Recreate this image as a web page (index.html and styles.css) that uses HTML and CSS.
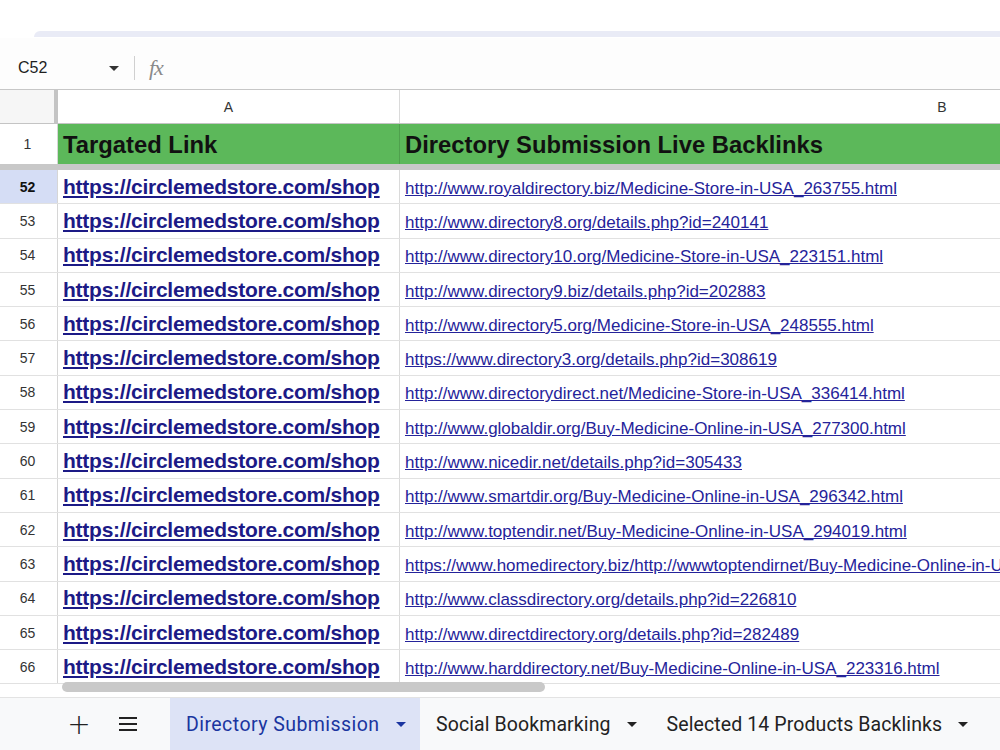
FILE: index.html
```html
<!DOCTYPE html>
<html lang="en">
<head>
	<meta charset="UTF-8">
	<link rel="stylesheet" href="styles.css">
</head>
<body>
<div id="page">
	<div class="topbar"><div class="band"></div></div>

	<div class="formula">
		<span class="namebox">C52</span>
		<span class="caret"></span>
		<span class="sep"></span>
		<span class="fx">fx</span>
	</div>

	<div id="sheet">
		<div class="row colhead">
			<div class="num"></div>
			<div class="cell a">A</div>
			<div class="cell b">B</div>
		</div>
		<div class="row title">
			<div class="num">1</div>
			<div class="cell a">Targated Link</div>
			<div class="cell b">Directory Submission Live Backlinks</div>
		</div>

		<div class="row sel">
			<div class="num">52</div>
			<div class="cell a"><a href="#">https://circlemedstore.com/shop</a></div>
			<div class="cell b"><a href="#">http://www.royaldirectory.biz/Medicine-Store-in-USA_263755.html</a></div>
		</div>
		<div class="row">
			<div class="num">53</div>
			<div class="cell a"><a href="#">https://circlemedstore.com/shop</a></div>
			<div class="cell b"><a href="#">http://www.directory8.org/details.php?id=240141</a></div>
		</div>
		<div class="row">
			<div class="num">54</div>
			<div class="cell a"><a href="#">https://circlemedstore.com/shop</a></div>
			<div class="cell b"><a href="#">http://www.directory10.org/Medicine-Store-in-USA_223151.html</a></div>
		</div>
		<div class="row">
			<div class="num">55</div>
			<div class="cell a"><a href="#">https://circlemedstore.com/shop</a></div>
			<div class="cell b"><a href="#">http://www.directory9.biz/details.php?id=202883</a></div>
		</div>
		<div class="row">
			<div class="num">56</div>
			<div class="cell a"><a href="#">https://circlemedstore.com/shop</a></div>
			<div class="cell b"><a href="#">http://www.directory5.org/Medicine-Store-in-USA_248555.html</a></div>
		</div>
		<div class="row">
			<div class="num">57</div>
			<div class="cell a"><a href="#">https://circlemedstore.com/shop</a></div>
			<div class="cell b"><a href="#">https://www.directory3.org/details.php?id=308619</a></div>
		</div>
		<div class="row">
			<div class="num">58</div>
			<div class="cell a"><a href="#">https://circlemedstore.com/shop</a></div>
			<div class="cell b"><a href="#">http://www.directorydirect.net/Medicine-Store-in-USA_336414.html</a></div>
		</div>
		<div class="row">
			<div class="num">59</div>
			<div class="cell a"><a href="#">https://circlemedstore.com/shop</a></div>
			<div class="cell b"><a href="#">http://www.globaldir.org/Buy-Medicine-Online-in-USA_277300.html</a></div>
		</div>
		<div class="row">
			<div class="num">60</div>
			<div class="cell a"><a href="#">https://circlemedstore.com/shop</a></div>
			<div class="cell b"><a href="#">http://www.nicedir.net/details.php?id=305433</a></div>
		</div>
		<div class="row">
			<div class="num">61</div>
			<div class="cell a"><a href="#">https://circlemedstore.com/shop</a></div>
			<div class="cell b"><a href="#">http://www.smartdir.org/Buy-Medicine-Online-in-USA_296342.html</a></div>
		</div>
		<div class="row">
			<div class="num">62</div>
			<div class="cell a"><a href="#">https://circlemedstore.com/shop</a></div>
			<div class="cell b"><a href="#">http://www.toptendir.net/Buy-Medicine-Online-in-USA_294019.html</a></div>
		</div>
		<div class="row">
			<div class="num">63</div>
			<div class="cell a"><a href="#">https://circlemedstore.com/shop</a></div>
			<div class="cell b"><a href="#">https://www.homedirectory.biz/http://wwwtoptendirnet/Buy-Medicine-Online-in-USA_294019.html</a></div>
		</div>
		<div class="row">
			<div class="num">64</div>
			<div class="cell a"><a href="#">https://circlemedstore.com/shop</a></div>
			<div class="cell b"><a href="#">http://www.classdirectory.org/details.php?id=226810</a></div>
		</div>
		<div class="row">
			<div class="num">65</div>
			<div class="cell a"><a href="#">https://circlemedstore.com/shop</a></div>
			<div class="cell b"><a href="#">http://www.directdirectory.org/details.php?id=282489</a></div>
		</div>
		<div class="row">
			<div class="num">66</div>
			<div class="cell a"><a href="#">https://circlemedstore.com/shop</a></div>
			<div class="cell b"><a href="#">http://www.harddirectory.net/Buy-Medicine-Online-in-USA_223316.html</a></div>
		</div>

		<div class="hscroll"></div>
	</div>

	<div class="gap"></div>

	<div class="tabs">
		<span class="tool plus">+</span>
		<span class="tool menu">
			<svg width="20" height="16" viewBox="0 0 20 16"><path d="M1 2h18M1 8h18M1 14h18" stroke="#222" stroke-width="2"/></svg>
		</span>
		<div class="tab active">Directory Submission<span class="tcaret"></span></div>
		<div class="tab">Social Bookmarking<span class="tcaret"></span></div>
		<div class="tab">Selected 14 Products Backlinks<span class="tcaret"></span></div>
	</div>
</div>
</body>
</html>
```

FILE: styles.css
```css
*{
	margin:0; padding:0; box-sizing:border-box;
}
html,body{
	width:1000px; height:750px; overflow:hidden;
	background:#fff;
	font-family:"Liberation Sans", Arial, sans-serif;
}
#page{
	width:1000px; height:750px;
	display:flex; flex-direction:column;
	overflow:hidden;
}

/* top strip */
.topbar{
	height:38px; padding-top:31px;
}
.band{
	height:6px; margin-left:34px;
	background:#e9ebf6;
	border-radius:6px 0 0 0;
}

/* formula bar */
.formula{
	height:52px;
	display:flex; align-items:center;
	border-bottom:1px solid #c7c7c7;
	background:#fdfdfd;
	padding-top:9px;
}
.namebox{
	width:100px; padding-left:18px;
	font-size:16px; color:#1f1f1f;
}
.caret{
	width:0; height:0;
	border-left:5px solid transparent;
	border-right:5px solid transparent;
	border-top:5px solid #333;
	margin-left:9px;
}
.sep{
	width:1px; height:24px; background:#d0d0d0;
	margin-left:15px;
}
.fx{
	margin-left:14px;
	font-family:"Liberation Serif", serif;
	font-style:italic; font-size:22px; color:#8a8a8a;
	letter-spacing:-1px;
}

/* grid */
#sheet{
	position:relative;
	height:607px;
	overflow:hidden;
}
.row{
	display:flex;
	height:34.3px;
	border-bottom:1px solid #e1e1e1;
}
.num{
	flex:none; width:58px;
	border-right:1px solid #d6d6d6;
	background:#fff;
	font-size:14px; color:#333;
	display:flex; align-items:center; justify-content:center;
	padding-right:2px;
}
.cell{
	flex:none;
	white-space:nowrap; overflow:hidden;
	display:flex; align-items:center;
	padding-left:5px;
}
.cell.a{
	width:342px; border-right:1px solid #dadada;
	font-weight:bold; font-size:21px; letter-spacing:-0.25px;
}
.cell.b{
	width:700px;
	font-size:17px; padding-top:4px;
}
.cell.a a{ color:#1c1a86; }
.cell.b a{ color:#25239a; }

.colhead{
	height:34px;
	border-bottom:1px solid #c4c4c4;
}
.colhead .num{
	background:#f6f6f6;
	border-right:4px solid #c4c4c4;
}
.colhead .cell{
	justify-content:center;
	font-size:14px; color:#333; font-weight:normal; letter-spacing:0;
	padding-left:0;
}
.colhead .cell.b{ width:1084px; padding-top:0; }

.title{
	height:46px;
	border-bottom:6px solid #c8c8c8;
}
.title .num{ background:#fff; font-size:14px; }
.title .cell{
	background:#5cb85a;
	font-weight:bold; font-size:23.8px; color:#111; letter-spacing:0;
	padding-top:2px;
}
.title .cell.a{ border-right:1px solid #4fa04d; }

.sel .num{
	background:#d5ddf5;
	font-weight:bold; color:#111;
}

.hscroll{
	position:absolute;
	left:62px; top:592px;
	width:483px; height:10px;
	background:#c9c9c9;
	border-radius:5px;
}

.gap{
	height:1px; background:#e3e3e3;
}

/* sheet tabs */
.tabs{
	flex:1;
	background:#f8f9fa;
	display:flex; align-items:stretch;
	font-family:Roboto, "Open Sans", sans-serif;
	font-size:19.5px; color:#222;
}
.tool{
	display:flex; align-items:center; justify-content:center;
}
.plus{
	margin-left:68px; width:22px;
	font-size:28px; font-weight:300;
	font-family:"DejaVu Sans", sans-serif;
}
.menu{
	margin-left:28px; width:20px;
}
.tab{
	flex:none;
	display:flex; align-items:center;
	white-space:nowrap;
	padding:0 14px 0 16px;
	letter-spacing:0.1px;
}
.tab.active{
	margin-left:32px;
	background:#dde3f6;
	color:#1a35a0;
	width:250px;
	letter-spacing:0.45px;
}
.tcaret{
	flex:none;
	width:0; height:0;
	border-left:5px solid transparent;
	border-right:5px solid transparent;
	border-top:5px solid currentColor;
	margin-left:16px;
}
.tab + .tab{ padding-left:16px; }
```
